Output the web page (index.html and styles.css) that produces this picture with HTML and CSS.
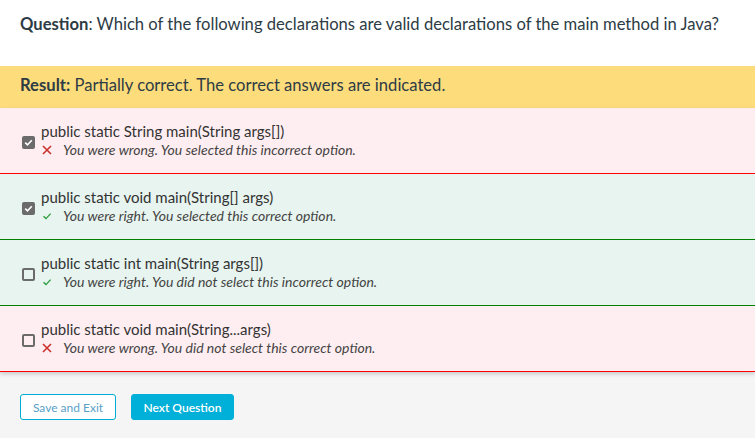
FILE: index.html
```html
<!DOCTYPE html>
<html>
<head>
<meta charset="utf-8">
<link rel="stylesheet" href="styles.css">
</head>
<body>
<div class="question"><b>Question</b>: Which of the following declarations are valid declarations of the main method in Java?</div>
<div class="result"><b>Result:</b> Partially correct. The correct answers are indicated.</div>
<div class="options">
  <div class="option wrong">
    <span class="box checked"><svg viewBox="0 0 13 13" width="13" height="13"><path d="M3.2 6.6 L5.5 8.9 L9.8 4.3" fill="none" stroke="#fff" stroke-width="1.6"/></svg></span>
    <div class="body">
      <div class="label">public static String main(String args[])</div>
      <div class="fb"><span class="mark"><svg viewBox="0 0 10 10" width="10" height="10"><path d="M1 1 L9 9 M9 1 L1 9" fill="none" stroke="#c9302c" stroke-width="1.6"/></svg></span><i>You were wrong. You selected this incorrect option.</i></div>
    </div>
  </div>
  <div class="option right">
    <span class="box checked"><svg viewBox="0 0 13 13" width="13" height="13"><path d="M3.2 6.6 L5.5 8.9 L9.8 4.3" fill="none" stroke="#fff" stroke-width="1.6"/></svg></span>
    <div class="body">
      <div class="label">public static void main(String[] args)</div>
      <div class="fb"><span class="mark"><svg viewBox="0 0 10 10" width="10" height="10"><path d="M1.5 5.3 L4 7.6 L8.6 2.6" fill="none" stroke="#2a9d3a" stroke-width="1.3"/></svg></span><i>You were right. You selected this correct option.</i></div>
    </div>
  </div>
  <div class="option right">
    <span class="box"></span>
    <div class="body">
      <div class="label">public static int main(String args[])</div>
      <div class="fb"><span class="mark"><svg viewBox="0 0 10 10" width="10" height="10"><path d="M1.5 5.3 L4 7.6 L8.6 2.6" fill="none" stroke="#2a9d3a" stroke-width="1.3"/></svg></span><i>You were right. You did not select this incorrect option.</i></div>
    </div>
  </div>
  <div class="option wrong last">
    <span class="box"></span>
    <div class="body">
      <div class="label">public static void main(String...args)</div>
      <div class="fb"><span class="mark"><svg viewBox="0 0 10 10" width="10" height="10"><path d="M1 1 L9 9 M9 1 L1 9" fill="none" stroke="#c9302c" stroke-width="1.6"/></svg></span><i>You were wrong. You did not select this correct option.</i></div>
    </div>
  </div>
</div>
<div class="footer">
  <button class="btn outline">Save and Exit</button>
  <button class="btn primary">Next Question</button>
</div>
</body>
</html>
```
FILE: styles.css
```css
html, body { margin: 0; padding: 0; }
body {
  font-family: Lato, "Open Sans", sans-serif;
  color: #2d3b45;
  background: #f5f5f5;
  width: 755px;
  height: 438px;
  overflow: hidden;
}
.question {
  background: #fff;
  height: 66px;
  box-sizing: border-box;
  padding: 14px 20px 0;
  font-size: 16.6px;
  line-height: 20px;
}
.result {
  background: #fddc7b;
  height: 42px;
  box-sizing: border-box;
  padding: 0 20px;
  font-size: 16.6px;
  line-height: 38px;
}
.options { position: relative; z-index: 1; box-shadow: 0 2px 4px rgba(0,0,0,0.18); }
.option {
  height: 66px;
  box-sizing: border-box;
  display: flex;
  align-items: center;
  padding: 0 20px 0 22px;
  gap: 6px;
}
.option.wrong { background: #ffeef1; border-bottom: 1px solid #f00; }
.option.right { background: #e7f4ef; border-bottom: 1px solid #008000; }
.box {
  width: 13px;
  height: 13px;
  box-sizing: border-box;
  border: 2px solid #6b6b6b;
  border-radius: 2px;
  flex: none;
  margin-top: 3px;
  display: flex;
  align-items: center;
  justify-content: center;
}
.box.checked { background: #6b6b6b; border: none; }
.box svg { display: block; }
.body { display: flex; flex-direction: column; margin-top: -2px; }
.label { font-size: 15px; line-height: 20px; color: #333; }
.fb { font-size: 14px; line-height: 18px; color: #444; display: flex; align-items: center; }
.fb i { font-style: italic; }
.mark { width: 21px; display: inline-flex; align-items: center; padding-left: 1px; }
.mark svg { display: block; }
.footer {
  display: flex;
  gap: 15px;
  padding: 22px 20px;
}
.btn {
  font-family: Lato, sans-serif;
  font-size: 12px;
  height: 26px;
  padding: 0;
  border-radius: 3px;
  cursor: pointer;
}
.btn.outline {
  background: #fff;
  border: 1px solid #00acd6;
  color: #5a9fc8;
  width: 96px;
}
.btn.primary {
  background: #00b0d8;
  border: 1px solid #00b0d8;
  color: #fff;
  font-weight: 600;
  width: 103px;
}
```
